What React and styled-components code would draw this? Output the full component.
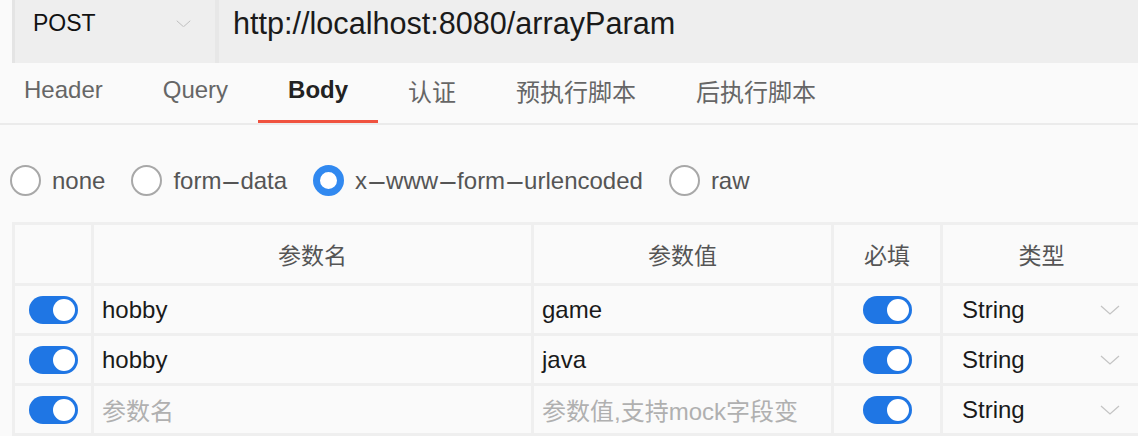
import React from 'react';
import styled, { createGlobalStyle } from 'styled-components';

const GlobalStyle = createGlobalStyle`
  html, body {
    margin: 0;
    padding: 0;
    background: #fafafa;
    overflow: hidden;
  }
  body {
    font-family: "Liberation Sans", "Noto Sans CJK SC", sans-serif;
  }
`;

const Page = styled.div`
  width: 1138px;
  height: 436px;
  background: #fafafa;
`;

const UrlBar = styled.div`
  display: flex;
  height: 63px;
  margin-left: 12px;
  background: #eeeeee;
  border-left: 3px solid #e4e4e4;
`;

const MethodSelect = styled.div`
  width: 204px;
  box-sizing: border-box;
  display: flex;
  align-items: center;
  justify-content: space-between;
  padding: 0 24px 16px 18px;
  border-right: 4px solid #e7e7e7;
  font-size: 23px;
  color: #111;
`;

const UrlText = styled.div`
  display: flex;
  align-items: center;
  padding: 0 0 16px 14px;
  font-size: 30.6px;
  color: #1a1a1a;
`;

const Tabs = styled.div`
  display: flex;
  height: 60px;
  margin-left: -6px;
  border-bottom: 2px solid #ebebeb;
`;

const Tab = styled.div`
  display: flex;
  align-items: center;
  padding: 0 30px 3px;
  font-size: 24px;
  color: ${p => (p.active ? '#222' : '#666')};
  font-weight: ${p => (p.active ? 700 : 400)};
  border-bottom: 3px solid ${p => (p.active ? '#f0523f' : 'transparent')};
`;

const RadioRow = styled.div`
  display: flex;
  align-items: center;
  height: 97px;
  box-sizing: border-box;
  padding: 14px 0 0 10px;
  gap: 26px;
`;

const RadioOption = styled.label`
  display: flex;
  align-items: center;
  gap: 11px;
  font-size: 24px;
  color: #555;
`;

const Dash = styled.span`
  display: inline-block;
  margin: 0 5.5px;
  transform: scaleX(2.6);
`;

const RadioCircle = styled.span`
  width: 31px;
  height: 31px;
  box-sizing: border-box;
  border-radius: 50%;
  background: #fff;
  border: ${p => (p.checked ? '7px solid #3189f0' : '2px solid #a8a8a8')};
`;

const Table = styled.div`
  display: grid;
  grid-template-columns: 79px 440px 300px 109px 200px;
  margin-left: 12px;
  border-top: 3px solid #efefef;
  border-left: 3px solid #efefef;
`;

const Cell = styled.div`
  box-sizing: border-box;
  height: ${p => (p.head ? '61px' : '50px')};
  display: flex;
  align-items: center;
  justify-content: ${p => (p.center ? 'center' : 'flex-start')};
  padding-left: ${p => (p.center ? '0' : '8px')};
  border-right: 3px solid #efefef;
  border-bottom: 3px solid #efefef;
  font-size: ${p => (p.head ? '23px' : '24px')};
  color: ${p => (p.head ? '#555' : p.placeholder ? '#b0b0b0' : '#1a1a1a')};
  white-space: nowrap;
  overflow: hidden;
`;

const TypeCell = styled(Cell)`
  justify-content: space-between;
  padding: 0 20px 0 19px;
`;

const Toggle = styled.span`
  width: 49px;
  height: 28px;
  border-radius: 14px;
  background: #1f76e4;
  display: flex;
  align-items: center;
  justify-content: flex-end;
  padding-right: 3px;
  box-sizing: border-box;

  &::after {
    content: '';
    width: 22px;
    height: 22px;
    border-radius: 50%;
    background: #fff;
  }
`;

const Chevron = ({ color = '#c4c4c4', size = 20 }) => (
  <svg width={size} height={size * 0.5} viewBox="0 0 20 10" fill="none">
    <path d="M1 1 L10 9 L19 1" stroke={color} strokeWidth="1.3" />
  </svg>
);

// hyphens in the body-type labels render long in the original font
const DashedLabel = ({ text }) =>
  text.split('-').map((part, i) => (
    <React.Fragment key={i}>
      {i > 0 && <Dash>-</Dash>}
      {part}
    </React.Fragment>
  ));

const rows = [
  { name: 'hobby', value: 'game' },
  { name: 'hobby', value: 'java' },
  { name: '参数名', value: '参数值,支持mock字段变', placeholder: true },
];

const tabs = ['Header', 'Query', 'Body', '认证', '预执行脚本', '后执行脚本'];
const bodyTypes = ['none', 'form-data', 'x-www-form-urlencoded', 'raw'];

const App = () => (
  <Page>
    <GlobalStyle />
    <UrlBar>
      <MethodSelect>
        POST
        <Chevron color="#bdbdbd" size={15} />
      </MethodSelect>
      <UrlText>http://localhost:8080/arrayParam</UrlText>
    </UrlBar>
    <Tabs>
      {tabs.map(t => (
        <Tab key={t} active={t === 'Body'}>
          {t}
        </Tab>
      ))}
    </Tabs>
    <RadioRow>
      {bodyTypes.map(t => (
        <RadioOption key={t}>
          <RadioCircle checked={t === 'x-www-form-urlencoded'} />
          <span>
            <DashedLabel text={t} />
          </span>
        </RadioOption>
      ))}
    </RadioRow>
    <Table>
      <Cell head center />
      <Cell head center>参数名</Cell>
      <Cell head center>参数值</Cell>
      <Cell head center>必填</Cell>
      <Cell head center>类型</Cell>
      {rows.map((r, i) => (
        <React.Fragment key={i}>
          <Cell center>
            <Toggle />
          </Cell>
          <Cell placeholder={r.placeholder}>{r.name}</Cell>
          <Cell placeholder={r.placeholder}>{r.value}</Cell>
          <Cell center>
            <Toggle />
          </Cell>
          <TypeCell>
            String
            <Chevron />
          </TypeCell>
        </React.Fragment>
      ))}
    </Table>
  </Page>
);

export default App;
